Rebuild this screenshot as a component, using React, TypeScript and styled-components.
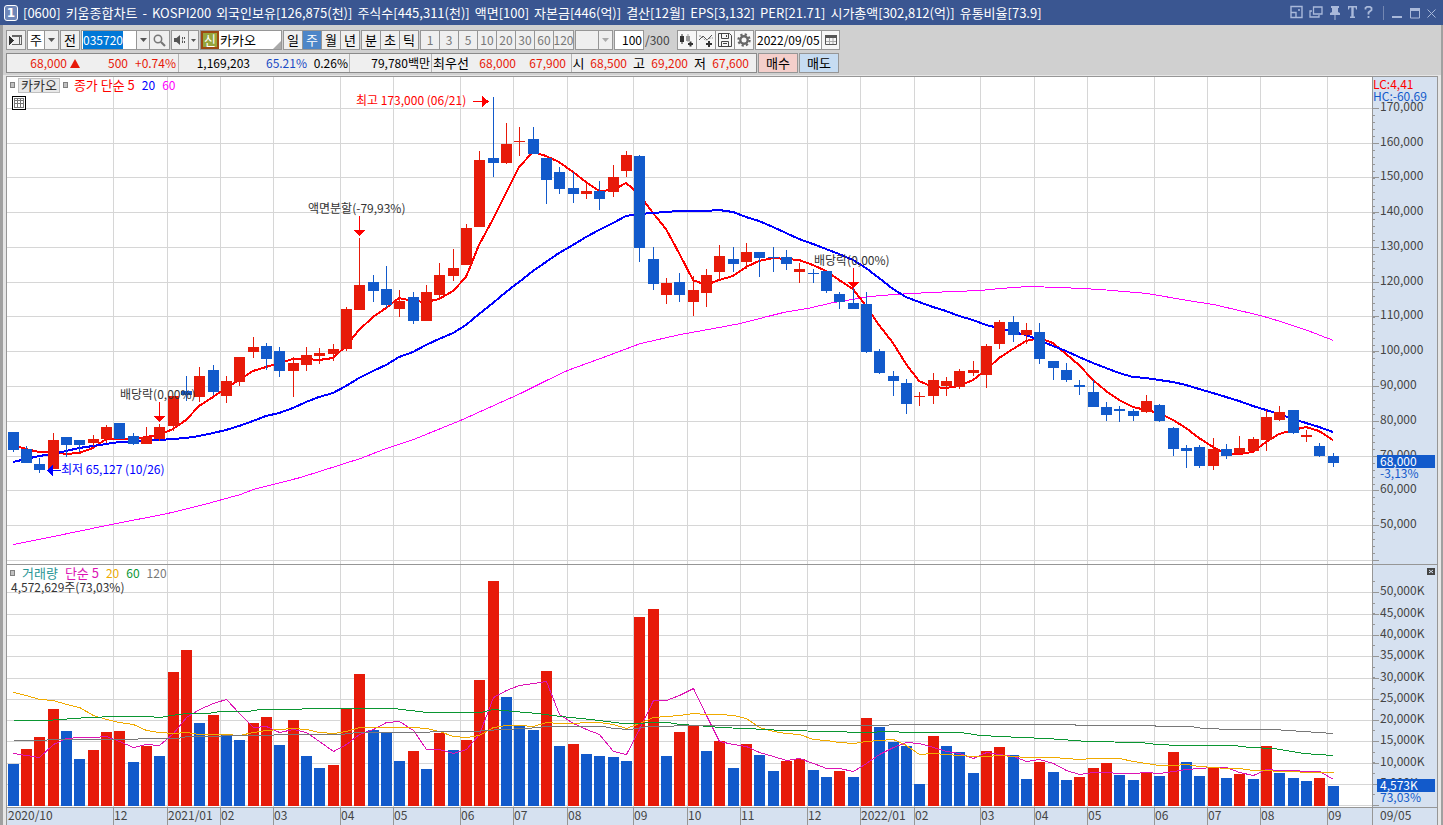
import React, { useEffect, useRef } from "react";
import styled, { createGlobalStyle, css } from "styled-components";

/* ---------- data ---------- */

type Tone = "r" | "b";
/* tone, high, body top, body bottom, low */
type Candle = [Tone, number, number, number, number];

const CANDLES: Candle[] = [
  ["b", 432, 432, 450, 452], ["b", 446, 449, 463, 463], ["b", 458, 464, 470, 473], ["r", 433, 440, 469, 469],
  ["b", 437, 437, 445, 457], ["b", 440, 440, 445, 452], ["r", 435, 439, 443, 446], ["r", 425, 427, 439, 443],
  ["b", 423, 423, 439, 439], ["b", 433, 436, 444, 445], ["r", 427, 437, 444, 444], ["r", 424, 427, 439, 441],
  ["r", 396, 396, 426, 431], ["b", 376, 391, 395, 401], ["r", 367, 376, 397, 402], ["b", 365, 370, 392, 395],
  ["r", 376, 381, 396, 403], ["r", 357, 357, 382, 386], ["r", 337, 347, 352, 358], ["b", 343, 346, 359, 370],
  ["b", 347, 351, 371, 377], ["r", 357, 363, 371, 397], ["r", 347, 355, 365, 371], ["r", 348, 353, 356, 364],
  ["r", 344, 349, 354, 361], ["r", 307, 309, 349, 351], ["r", 238, 285, 310, 310], ["b", 275, 282, 291, 302],
  ["b", 266, 289, 305, 308], ["r", 290, 301, 309, 317], ["b", 292, 297, 321, 324], ["r", 285, 292, 321, 321],
  ["r", 263, 275, 295, 299], ["r", 249, 268, 276, 281], ["r", 224, 228, 265, 265], ["r", 151, 160, 227, 227],
  ["b", 97, 158, 163, 177], ["r", 123, 144, 163, 164], ["r", 127, 141, 142, 156], ["b", 127, 139, 154, 154],
  ["b", 158, 158, 180, 204], ["b", 167, 172, 189, 194], ["b", 172, 188, 194, 203], ["r", 183, 191, 194, 199],
  ["b", 181, 191, 199, 210], ["r", 165, 177, 192, 197], ["r", 151, 155, 171, 177], ["b", 155, 156, 248, 262],
  ["b", 247, 259, 284, 290], ["r", 278, 283, 295, 304], ["b", 273, 282, 295, 302], ["r", 276, 290, 302, 316],
  ["r", 269, 275, 293, 307], ["r", 245, 256, 272, 280], ["b", 247, 259, 264, 272], ["r", 243, 252, 262, 269],
  ["b", 252, 252, 258, 277], ["b", 247, 257, 258, 272], ["b", 250, 257, 264, 270], ["r", 263, 269, 272, 283],
  ["b", 269, 273, 274, 283], ["b", 271, 271, 291, 293], ["b", 292, 294, 302, 309], ["b", 288, 303, 309, 309],
  ["b", 292, 304, 352, 353], ["b", 349, 351, 373, 374], ["b", 371, 376, 381, 396], ["b", 379, 383, 404, 414],
  ["r", 392, 396, 397, 406], ["r", 373, 380, 396, 404], ["r", 377, 381, 386, 396], ["r", 369, 371, 387, 389],
  ["r", 361, 370, 373, 376], ["r", 344, 346, 375, 388], ["r", 320, 322, 344, 349], ["b", 316, 322, 335, 342],
  ["r", 323, 330, 335, 344], ["b", 323, 332, 359, 364], ["b", 361, 361, 368, 380], ["b", 363, 370, 380, 382],
  ["b", 380, 385, 387, 395], ["b", 380, 392, 407, 407], ["b", 402, 407, 415, 421], ["b", 406, 409, 411, 422],
  ["b", 409, 411, 416, 421], ["r", 395, 401, 412, 413], ["b", 404, 405, 421, 422], ["b", 427, 428, 449, 456],
  ["b", 445, 448, 451, 468], ["b", 445, 447, 466, 468], ["r", 438, 449, 466, 470], ["b", 444, 449, 456, 459],
  ["r", 436, 448, 453, 453], ["r", 437, 439, 451, 451], ["r", 410, 417, 440, 451], ["r", 406, 412, 420, 421],
  ["b", 410, 410, 433, 434], ["r", 430, 435, 437, 442], ["b", 443, 446, 456, 457], ["b", 453, 456, 463, 467],
];

const VOLUME_TONES =
  "brrrbbrrrb" + "rbrrbrbbrr" + "brbbrrrbbb" + "rbrbrrrbbb" + "rbrbbbbrrb" + "rrbrbrbbrr" + "bbrbrbbbbr" + "bbbrrbbrbb" + "rrrbbrbrbb" + "rbrbrbbbrb";
const VOLUME_TOPS = [
  764, 749, 737, 709, 731, 759, 750, 732, 731, 762, 746, 756, 672, 650, 723, 715, 735, 740, 723, 717,
  745, 720, 756, 768, 765, 709, 674, 730, 732, 761, 751, 769, 733, 750, 740, 680, 581, 697, 726, 730,
  671, 746, 744, 754, 756, 757, 761, 617, 609, 756, 732, 726, 751, 741, 768, 744, 755, 771, 761, 759,
  770, 777, 771, 777, 718, 727, 742, 746, 784, 736, 746, 752, 773, 751, 747, 755, 779, 762, 772, 780,
  777, 768, 763, 775, 780, 773, 776, 752, 762, 776, 768, 778, 774, 779, 746, 773, 778, 781, 778, 786,
];

const MONTHS: [number, string][] = [
  [113, "12"], [167, "2021/01"], [220, "02"], [273, "03"], [340, "04"], [393, "05"], [460, "06"], [513, "07"],
  [567, "08"], [633, "09"], [687, "10"], [740, "11"], [807, "12"], [860, "2022/01"], [914, "02"], [980, "03"],
  [1034, "04"], [1087, "05"], [1154, "06"], [1207, "07"], [1260, "08"], [1327, "09"],
];

const PRICE_LEVELS: [number, string][] = [
  [108, "170,000"], [143, "160,000"], [177, "150,000"], [212, "140,000"], [247, "130,000"], [282, "120,000"],
  [316, "110,000"], [351, "100,000"], [386, "90,000"], [421, "80,000"], [456, "70,000"], [490, "60,000"],
  [525, "50,000"], [560, ""],
];
const VOLUME_LEVELS: [number, string][] = [
  [592, "50,000K"], [614, "45,000K"], [635, "40,000K"], [656, "35,000K"], [678, "30,000K"], [699, "25,000K"],
  [720, "20,000K"], [741, "15,000K"], [763, "10,000K"], [784, "5,000K"], [805, ""],
];

const MA60_PRICE =
  "13,544 53,536 106,525 167,513 200,505 240,494 253,489 300,477 360,458 383,449 413,439 460,420 480,411 520,393 546,380 567,370 600,358 640,343 680,334 713,328 740,323 763,317 783,312 807,308 833,302 870,296 893,294 930,292 953,291 980,290 1000,288 1027,286 1060,287 1100,289 1147,293 1187,300 1213,304 1260,315 1280,321 1307,330 1333,340";
const MA60_VOLUME =
  "13,720 45,720 60,719 87,717 117,716 147,716 160,717 170,715 187,713 207,713 220,711 247,711 260,709 300,709 303,708 393,708 410,710 427,712 480,712 493,709 513,711 537,713 560,716 590,719 623,723 667,722 680,724 697,725 720,727 767,729 780,730 833,731 860,732 893,731 903,732 960,732 980,735 1020,737 1047,738 1087,741 1140,742 1157,744 1180,745 1233,745 1250,747 1273,748 1303,753 1333,755";
const MA120_VOLUME =
  "13,740 40,740 53,739 133,739 143,738 177,738 187,736 217,736 227,735 270,735 277,734 340,734 357,732 387,732 473,731 500,729 527,728 547,726 603,726 613,728 630,729 647,726 670,726 677,725 887,725 890,724 1073,724 1077,725 1153,725 1157,726 1190,726 1203,728 1233,729 1273,729 1303,731 1333,733";

const centre = (i: number) => Math.floor(13 + (i * 40) / 3);

/* Moving average over the series; the first values come from the history before the first bar. */
function averagePoints(series: number[], span: number, history: number[]) {
  return series
    .map((_, i) => {
      const y =
        i < history.length
          ? history[i]
          : series.slice(i - span + 1, i + 1).reduce((a, b) => a + b, 0) / span;
      return `${centre(i)},${Math.round(y)}`;
    })
    .join(" ");
}

const CLOSES = CANDLES.map(([tone, , top, bottom]) => (tone === "r" ? top : bottom));
const MA5_PRICE = averagePoints(CLOSES, 5, [445, 449, 452, 452]);
const MA20_PRICE = averagePoints(CLOSES, 20, [
  462, 459, 456, 454, 451, 448, 446, 444, 442, 442, 441, 440, 439, 438, 436, 433, 430, 426, 421,
]);
const MA5_VOLUME = averagePoints(VOLUME_TOPS, 5, [753, 755, 757, 744]);
const MA20_VOLUME = averagePoints(VOLUME_TOPS, 20, [
  692, 695, 699, 700, 704, 707, 715, 719, 722, 724, 730, 732, 733, 732, 734, 734, 734, 735, 732,
]);

/* ---------- styles ---------- */

const C = {
  red: "#e71a09",
  blue: "#125acb",
  grid: "#d6d6d6",
  line: "#969696",
  axis: "#d6e1f0",
  text: "#444444",
};
const tones = { r: C.red, b: C.blue };

const GlobalStyle = createGlobalStyle`
  * { box-sizing: border-box; }
  body { margin: 0; background: #d0d0d0; }
  body, button, input, select {
    font-family: "Noto Sans CJK KR", "Liberation Sans", sans-serif;
    font-size: 12px;
    line-height: 18px;
    color: #000;
  }
  button, input, select { margin: 0; border: 0; padding: 0; border-radius: 0; outline: none; }
  svg { display: block; }
  svg text { font-size: 12px; }
`;

const Window = styled.div`
  min-height: 100vh;
  display: flex;
  flex-direction: column;
  overflow: hidden;
`;

const TitleBar = styled.header`
  height: 25px;
  flex: none;
  display: flex;
  align-items: center;
  justify-content: space-between;
  padding: 0 7px 0 4px;
  background: #3a5691;
  color: #fff;
`;
const TitleText = styled.h1`
  margin: 0;
  display: flex;
  align-items: center;
  gap: 5px;
  font-size: 13px;
  font-weight: 400;
  line-height: 20px;
  white-space: nowrap;
`;
const WindowNumber = styled.span`
  width: 14px;
  height: 16px;
  border: 1px solid #fff;
  border-radius: 3px;
  background: #6f87b8;
  font: bold 12px/14px "DejaVu Sans", sans-serif;
  text-align: center;
`;
const WindowTools = styled.div`
  display: flex;
  align-items: center;
  gap: 6px;
`;
const ToolButton = styled.button`
  height: 16px;
  background: none;
  color: #a9b9da;
`;
const ToolDivider = styled.span`
  width: 1px;
  height: 14px;
  margin: 0 1px 0 4px;
  background: #7387b2;
`;

const Body = styled.main`
  flex: 1;
  display: flex;
  flex-direction: column;
  border: solid #a0a0a0;
  border-width: 0 2px 0 3px;
`;
const Controls = styled.div`
  flex: none;
  height: 50px;
  padding: 5px 3px 0;
  display: flex;
  flex-direction: column;
  gap: 3px;
  white-space: nowrap;
`;
const Row = styled.div<{ $gap: number }>`
  display: flex;
  gap: ${(p) => p.$gap}px;
  height: 20px;
`;
const Group = styled.div<{ $white?: boolean }>`
  display: flex;
  height: 20px;
  flex: none;
  border: 1px solid #969696;
  background: ${(p) => (p.$white ? "#fff" : "#efefef")};
  & > * + * { border-left: 1px solid #969696; }
`;
const Key = styled.button<{ $w: number; $state?: "on" | "off"; $plain?: boolean }>`
  width: ${(p) => p.$w}px;
  flex: none;
  height: 18px;
  display: flex;
  align-items: center;
  justify-content: center;
  font-size: 13px;
  background: ${(p) => (p.$plain ? "#f6f6f6" : "#efefef")};
  ${(p) => p.$state === "on" && css`background: #4d86c8; color: #fff;`}
  ${(p) => p.$state === "off" && css`color: #777; font-size: 12px;`}
`;
const Pick = styled.select<{ $w: number }>`
  appearance: none;
  width: ${(p) => p.$w}px;
  height: 18px;
  padding-left: 2px;
  background: #fff;
  font-size: 13px;
  &:disabled { background: #efefef; opacity: 1; }
`;
const Field = styled.input<{ $w: number; $right?: boolean }>`
  width: ${(p) => p.$w}px;
  height: 18px;
  padding: 0 1px;
  background: #fff;
  text-align: ${(p) => (p.$right ? "right" : "left")};
  caret-color: #f08030;
  &::selection { background: #0078d7; color: #fff; }
`;
const StockName = styled.div`
  flex: none;
  width: 82px;
  height: 20px;
  display: flex;
  justify-content: space-between;
  border: 1px solid #969696;
  background: #fff;
  font-size: 13px;
`;
const CreditMark = styled.span`
  width: 18px;
  height: 18px;
  border: 2px solid #9c4a12;
  background: #96a53c;
  color: #fff;
  line-height: 14px;
  text-align: center;
`;
const NameText = styled.span`
  flex: 1;
  padding-left: 1px;
`;
const Corner = styled.svg`
  align-self: flex-end;
`;
const Total = styled.span`
  width: 31px;
  line-height: 20px;
  color: #444;
`;

const Quote = styled.div`
  display: flex;
  height: 20px;
  flex: none;
  border: 1px solid #8a8a8a;
  background: #efefef;
`;
const QuoteCell = styled.div<{ $end: number; $last?: boolean }>`
  display: flex;
  padding-right: ${(p) => p.$end}px;
  border-right: ${(p) => (p.$last ? 0 : 1)}px solid #b4b4b4;
`;
const Value = styled.span<{ $w: number; $color?: string }>`
  width: ${(p) => p.$w}px;
  text-align: right;
  color: ${(p) => p.$color ?? "#000"};
`;
const Caption = styled.span<{ $w: number }>`
  width: ${(p) => p.$w}px;
  font-size: 13px;
  text-align: center;
`;
const Rise = styled.svg`
  margin: 5px 2px 0 3px;
`;
const Order = styled.button<{ $fill: string }>`
  width: 40px;
  height: 20px;
  border: 1px solid #969696;
  background: ${(p) => p.$fill};
  font-size: 13px;
`;

const Sheet = styled.section`
  flex: 1;
  display: flex;
  padding: 1px 3px 0;
  background: #e6e6e6;
`;
const Frame = styled.div`
  flex: 1;
  min-width: 0;
  display: flex;
  flex-direction: column;
  border: solid ${C.line};
  border-width: 1px 1px 0;
`;
const Panel = styled.div<{ $h: number; $last?: boolean }>`
  position: relative;
  display: flex;
  flex: none;
  height: ${(p) => p.$h}px;
  border-bottom: ${(p) => (p.$last ? 0 : 1)}px solid ${C.line};
`;
const Plot = styled.svg<{ $axis?: boolean }>`
  flex: 1;
  min-width: 0;
  height: 100%;
  overflow: ${(p) => (p.$axis ? "visible" : "hidden")};
  background: ${(p) => (p.$axis ? C.axis : "#fff")};
`;
const Scale = styled.svg`
  flex: none;
  width: 65px;
  height: 100%;
  overflow: visible;
  border-left: 1px solid ${C.line};
  background: ${C.axis};
`;
const Legend = styled.div`
  position: absolute;
  top: 0;
  left: 3px;
  display: flex;
  flex-direction: column;
  color: #333;
`;
const LegendRow = styled.div<{ $gap: number }>`
  display: flex;
  align-items: center;
  gap: ${(p) => p.$gap}px;
  height: 16px;
  line-height: 16px;
`;
const Dot = styled.span`
  width: 5px;
  height: 6px;
  border: 1px solid #808080;
  background: #c0c0c0;
`;
const NameTag = styled.button`
  width: 42px;
  height: 15px;
  border: 1px solid #c0c0c0;
  background: #e8e8e8;
  font-size: 13px;
  line-height: 12px;
  color: #333;
`;
const Ink = styled.span<{ $color: string; $name?: boolean }>`
  color: ${(p) => p.$color};
  font-size: ${(p) => (p.$name ? 13 : 12)}px;
`;
const GridButton = styled.button`
  width: 14px;
  height: 14px;
  margin: 3px 0 0 2px;
  border: 1px solid #000;
  background: #fff;
`;
const LegendNote = styled.div`
  padding-left: 1px;
  line-height: 12px;
`;
const ClosePanel = styled.button`
  position: absolute;
  top: 3px;
  right: 2px;
  width: 8px;
  height: 7px;
  background: #444;
`;

/* ---------- small drawings ---------- */

const Down = ({ small, faint }: { small?: boolean; faint?: boolean }) => (
  <svg width={small ? 5 : 7} height={small ? 3 : 4} viewBox="0 0 7 4" fill={faint ? "#aaa" : "#555"} aria-hidden="true">
    <path d="M0 0h7L3.500 4z" />
  </svg>
);
const PanelIcon = () => (
  <svg width="14" height="14" viewBox="0 0 14 14" fill="none" stroke="#666" shapeRendering="crispEdges" aria-hidden="true">
    <path d="M3.500 3V2.500h9v9h-9V11M10.500 3v9M3 3.500h10" />
    <path d="M0 3v9l5-4.500z" fill="#333" stroke="none" />
  </svg>
);
const SearchIcon = () => (
  <svg width="13" height="13" viewBox="0 0 13 13" fill="none" stroke="#777" aria-hidden="true">
    <circle cx="5" cy="5" r="3.700" strokeWidth="1.500" />
    <path d="M8 8l4 4" strokeWidth="2.200" />
  </svg>
);
const SpeakerIcon = () => (
  <svg width="13" height="12" viewBox="0 0 13 12" fill="#555" aria-hidden="true">
    <path d="M0 4h2.500L6 1v10L2.500 8H0zM8 3h1v2H8zM8 7h1v2H8zM10 3h1v2h-1zM10 7h1v2h-1zM8 5.500h1v1H8z" />
  </svg>
);
const CandleIcon = () => (
  <svg width="16" height="15" viewBox="0 0 16 15" aria-hidden="true">
    <path d="M1 3h4v6H1zM2.500 1h1v10h-1z" fill="#333" />
    <path d="M7 3h4v5H7zM8.500 1h1v8h-1z" fill="#999" />
    <path d="M9 11h5M11.500 8.500v5" stroke="#333" strokeWidth="2" />
  </svg>
);
const CurveIcon = () => (
  <svg width="16" height="15" viewBox="0 0 16 15" fill="none" aria-hidden="true">
    <path d="M1 7l4-4 4 4 5-5" stroke="#555" />
    <path d="M1 3h2l4 4h2l3-2h3" stroke="#999" strokeDasharray="2 1" />
    <path d="M8 11h6M11 8v6" stroke="#333" strokeWidth="2" />
  </svg>
);
const SaveIcon = () => (
  <svg width="14" height="14" viewBox="0 0 14 14" fill="none" stroke="#444" aria-hidden="true">
    <path d="M.500 .500h11l2 2v11H.500zM3.500 .500v5h7v-5M3.500 13.500v-5h7v5M5 10.500h4M8.500 2v2" />
  </svg>
);
const GearIcon = () => (
  <svg width="14" height="14" viewBox="0 0 14 14" fill="none" stroke="#666" aria-hidden="true">
    <circle cx="7" cy="7" r="3.700" strokeWidth="2.400" />
    <circle cx="7" cy="7" r="5.600" strokeWidth="2.200" strokeDasharray="2.200 2.200" />
  </svg>
);
const CalendarIcon = () => (
  <svg width="12" height="12" viewBox="0 0 12 12" fill="none" stroke="#555" aria-hidden="true">
    <path d="M.500 1.500h11v9H.500z" />
    <path d="M0 2.500h12" strokeWidth="3" />
    <path d="M1 7.500h10M4.500 4v6M8 4v6" stroke="#aaa" />
  </svg>
);
const TableIcon = () => (
  <svg width="12" height="12" viewBox="0 0 12 12" fill="none" stroke="#777" shapeRendering="crispEdges" aria-hidden="true">
    <path d="M1.500 1.500h9v9h-9zM1.500 3.500h9M1.500 6.500h9M4.500 1.500v9M7.500 1.500v9" />
  </svg>
);

const WINDOW_ICONS: [string, number, React.ReactNode][] = [
  ["창 축소", 13, <path key="a" d="M1 1.500h11v11H1zM1 7.500h5v5M8 5h2" stroke="currentColor" strokeWidth="1.400" fill="none" />],
  ["창 복사", 14, <path key="b" d="M4.500 2h8.500v7H4.500zM3 6H1v6h9v-2" stroke="currentColor" strokeWidth="1.300" fill="none" />],
  ["고정", 12, <path key="c" d="M2 1h8v2H9v4l2 1v2H6.500v5h-1v-5H1V8l2-1V3H2z" fill="currentColor" />],
  ["글꼴", 11, <path key="d" d="M1 1h9v3.500H9L8.500 2.500H6.700v9H8V13H3v-1.500h1.300v-9H2.500L2 4.500H1z" fill="currentColor" />],
  ["도움말", 9, <path key="e" d="M1.500 4.500V3L3 1.800h3L7.500 3v2L4.500 7.500v2M4.500 11v2" stroke="currentColor" strokeWidth="1.800" fill="none" />],
];

/* ---------- chart pieces ---------- */

const GridLines = ({ levels }: { levels: [number, string][] }) => (
  <g fill={C.grid} shapeRendering="crispEdges">
    {MONTHS.map(([x]) => (
      <rect key={x} x={x} y="77" width="1" height="730" />
    ))}
    {levels.map(([y]) => (
      <rect key={y} x="7" y={y} width="100%" height="1" />
    ))}
  </g>
);

const Average = ({ points, color, bold }: { points: string; color: string; bold?: boolean }) => (
  <polyline
    points={points}
    fill="none"
    stroke={color}
    strokeWidth={bold ? 2 : 1}
    transform={bold ? undefined : "translate(.5 .5)"}
    shapeRendering="crispEdges"
  />
);

const EventMark = ({ x, y, textX, label }: { x: number; y: number; textX: number; label: string }) => (
  <g>
    <path d={`M${x} ${y - 20}h1v14h-1zM${x - 5} ${y - 6}h11l-5.500 6z`} fill="#f00" shapeRendering="crispEdges" />
    <text x={textX} y={y - 23} fill="#333">{label}</text>
  </g>
);

const ScaleMarks = ({ levels, step, from, to }: { levels: [number, string][]; step: number; from: number; to: number }) => {
  const minor: number[] = [];
  for (let y = levels[levels.length - 1][0]; y > from; y -= step) if (y < to) minor.push(Math.round(y));
  return (
    <g>
      <g fill={C.line} shapeRendering="crispEdges">
        {minor.map((y) => <rect key={y} x="0" y={y} width="2" height="1" />)}
        {levels.map(([y]) => <rect key={y} x="0" y={y} width="6" height="1" />)}
      </g>
      {levels.map(([y, label]) => (
        <text key={y} x="7" y={y + 3} fill={C.text}>{label}</text>
      ))}
    </g>
  );
};

/* ---------- page ---------- */

const TITLE = [
  "[0600]", "키움종합차트", "-", "KOSPI200", "외국인보유[126,875(천)]", "주식수[445,311(천)]", "액면[100]",
  "자본금[446(억)]", "결산[12월]", "EPS[3,132]", "PER[21.71]", "시가총액[302,812(억)]", "유통비율[73.9]",
];

function Title() {
  return (
    <TitleBar>
      <TitleText>
        <WindowNumber>1</WindowNumber>
        {TITLE.map((t) => <span key={t}>{t}</span>)}
      </TitleText>
      <WindowTools>
        {WINDOW_ICONS.map(([label, w, art]) => (
          <ToolButton key={label} aria-label={label}>
            <svg width={w} height="15" viewBox={`0 0 ${w} 15`}>{art}</svg>
          </ToolButton>
        ))}
        <ToolDivider />
        <ToolButton aria-label="최소화">
          <svg width="12" height="15"><path d="M1 11h10v2H1z" fill="currentColor" /></svg>
        </ToolButton>
        <ToolButton aria-label="최대화">
          <svg width="12" height="15" fill="none" stroke="currentColor"><path d="M1.500 4v9h9V4" /><path d="M1 4.500h10" strokeWidth="3" /></svg>
        </ToolButton>
        <ToolButton aria-label="닫기">
          <svg width="9" height="15" fill="none" stroke="currentColor"><path d="M.500 4.500l8 8M8.500 4.500l-8 8" /></svg>
        </ToolButton>
      </WindowTools>
    </TitleBar>
  );
}

function Toolbar() {
  const code = useRef<HTMLInputElement>(null);
  useEffect(() => {
    code.current?.focus();
    code.current?.select();
  }, []);
  return (
    <Row $gap={1}>
      <Group><Key $w={18} aria-label="패널"><PanelIcon /></Key></Group>
      <Group>
        <Pick $w={16} aria-label="종목 구분" defaultValue="주"><option>주</option></Pick>
        <Key $w={14} aria-label="구분 펼치기"><Down /></Key>
      </Group>
      <Group><Key $w={18}>전</Key></Group>
      <Group $white>
        <Field $w={54} ref={code} aria-label="종목 코드" defaultValue="035720" />
        <Key $w={13} aria-label="종목 목록"><Down /></Key>
        <Key $w={20} aria-label="종목 검색"><SearchIcon /></Key>
      </Group>
      <Group>
        <Key $w={16} aria-label="소리"><SpeakerIcon /></Key>
        <Key $w={10} aria-label="소리 설정"><Down small /></Key>
      </Group>
      <StockName>
        <CreditMark>신</CreditMark>
        <NameText>카카오</NameText>
        <Corner width="8" height="8" fill="#aaa" aria-hidden="true"><path d="M8 0v8H0z" /></Corner>
      </StockName>
      <Group>
        {["일", "주", "월", "년"].map((t) => (
          <Key key={t} $w={t === "일" ? 18 : 19} $state={t === "주" ? "on" : undefined} aria-pressed={t === "주"}>{t}</Key>
        ))}
      </Group>
      <Group>
        {["분", "초", "틱"].map((t) => <Key key={t} $w={t === "분" ? 18 : 19}>{t}</Key>)}
      </Group>
      <Group>
        {["1", "3", "5", "10", "20", "30", "60", "120"].map((t) => (
          <Key key={t} $w={t === "1" ? 18 : t === "120" ? 20 : 19} $state="off" disabled>{t}</Key>
        ))}
      </Group>
      <Group>
        <Pick $w={22} aria-label="주기 선택" disabled><option></option></Pick>
        <Key $w={14} aria-label="주기 펼치기" disabled><Down faint /></Key>
      </Group>
      <Group $white><Field $w={28} $right aria-label="조회 건수" defaultValue="100" /></Group>
      <Total>/300</Total>
      <Group>
        <Key $w={18} $plain aria-label="봉 추가"><CandleIcon /></Key>
        <Key $w={19} $plain aria-label="지표 추가"><CurveIcon /></Key>
        <Key $w={19} $plain aria-label="저장"><SaveIcon /></Key>
        <Key $w={19} $plain aria-label="설정"><GearIcon /></Key>
      </Group>
      <Group $white>
        <Field $w={65} aria-label="조회 일자" defaultValue="2022/09/05" />
        <Key $w={18} $plain aria-label="달력"><CalendarIcon /></Key>
      </Group>
    </Row>
  );
}

function QuoteRow() {
  return (
    <Row $gap={1}>
      <Quote>
        <QuoteCell $end={2}>
          <Value $w={60} $color={C.red}>68,000</Value>
          <Rise width="10" height="9" fill={C.red} aria-label="상승"><path d="M5 0l5 9H0z" /></Rise>
          <Value $w={46} $color={C.red}>500</Value>
          <Value $w={48} $color={C.red}>+0.74%</Value>
        </QuoteCell>
        <QuoteCell $end={1}>
          <Value $w={71}>1,169,203</Value>
          <Value $w={57} $color="#1a4bc4">65.21%</Value>
          <Value $w={41}>0.26%</Value>
        </QuoteCell>
        <QuoteCell $end={1}><Value $w={80}>79,780백만</Value></QuoteCell>
        <QuoteCell $end={5}>
          <Caption $w={38}>최우선</Caption>
          <Value $w={46} $color={C.red}>68,000</Value>
          <Value $w={50} $color={C.red}>67,900</Value>
        </QuoteCell>
        <QuoteCell $end={7} $last>
          <Caption $w={13}>시</Caption>
          <Value $w={42} $color={C.red}>68,500</Value>
          <Caption $w={24}>고</Caption>
          <Value $w={37} $color={C.red}>69,200</Value>
          <Caption $w={24}>저</Caption>
          <Value $w={37} $color={C.red}>67,600</Value>
        </QuoteCell>
      </Quote>
      <Order $fill="#f4cfcb">매수</Order>
      <Order $fill="#c6dcf2">매도</Order>
    </Row>
  );
}

function PricePanel() {
  return (
    <Panel $h={488}>
      <Plot role="img" aria-label="카카오 주봉 차트">
        <g transform="translate(-7 -77)">
          <GridLines levels={PRICE_LEVELS} />
          <Average points={MA60_PRICE} color="#f0f" />
          <Average points={MA5_PRICE} color="#f00" bold />
          <Average points={MA20_PRICE} color="#00f" bold />
          <g shapeRendering="crispEdges">
            {CANDLES.map(([tone, high, top, bottom, low], i) => (
              <g key={i} fill={tones[tone]}>
                <rect x={centre(i)} y={high} width="1" height={low - high} />
                <rect x={centre(i) - 5} y={top} width="11" height={bottom - top} />
              </g>
            ))}
          </g>
          <EventMark x={159} y={422} textX={120} label="배당락(0,00%)" />
          <EventMark x={359} y={236} textX={308} label="액면분할(-79,93%)" />
          <EventMark x={853} y={288} textX={814} label="배당락(0,00%)" />
          <text x="356" y="105" fill="#f00">최고 173,000 (06/21)</text>
          <path d="M473 101h9v-5l7 5.500-7 5.500v-5h-9z" fill="#f00" shapeRendering="crispEdges" />
          <text x="61" y="474" fill="#00f">최저 65,127 (10/26)</text>
          <path d="M61 470h-8v-5l-6 5.500 6 5.500v-5h8z" fill="#00f" shapeRendering="crispEdges" />
        </g>
      </Plot>
      <Scale>
        <g transform="translate(0 -77)">
          <ScaleMarks levels={PRICE_LEVELS} step={6.95} from={108} to={560} />
          <rect x="0" y="77" width="64" height="25" fill={C.axis} />
          <text x="0" y="89" fill="#f00">LC:4,41</text>
          <text x="0" y="101" fill={C.blue}>HC:-60,69</text>
          <rect x="4" y="455" width="58" height="13" fill={C.blue} />
          <text x="7" y="466" fill="#fff">68,000</text>
          <text x="7" y="478" fill={C.blue}>-3,13%</text>
        </g>
      </Scale>
      <Legend>
        <LegendRow $gap={3}>
          <Dot />
          <NameTag>카카오</NameTag>
          <Dot />
          <LegendRow $gap={7}>
            <Ink $color="#f00" $name>&nbsp;종가 단순 5</Ink>
            <Ink $color="#00f">20</Ink>
            <Ink $color="#f0f">60</Ink>
          </LegendRow>
        </LegendRow>
        <GridButton aria-label="데이터 표"><TableIcon /></GridButton>
      </Legend>
    </Panel>
  );
}

function VolumePanel() {
  return (
    <Panel $h={243}>
      <Plot role="img" aria-label="거래량 차트">
        <g transform="translate(-7 -565)">
          <GridLines levels={VOLUME_LEVELS} />
          <g shapeRendering="crispEdges">
            {VOLUME_TOPS.map((top, i) => (
              <rect key={i} x={centre(i) - 5} y={top} width="11" height={806 - top} fill={tones[VOLUME_TONES[i] as Tone]} />
            ))}
          </g>
          <Average points={MA5_VOLUME} color="#dc14b4" />
          <Average points={MA20_VOLUME} color="#f0aa00" />
          <Average points={MA60_VOLUME} color="#0a9632" />
          <Average points={MA120_VOLUME} color="#787878" />
        </g>
      </Plot>
      <Scale>
        <g transform="translate(0 -565)">
          <ScaleMarks levels={VOLUME_LEVELS} step={10.65} from={575} to={805} />
          <rect x="4" y="779" width="58" height="13" fill={C.blue} />
          <text x="7" y="790" fill="#fff">4,573K</text>
          <text x="7" y="802" fill={C.blue}>73,03%</text>
        </g>
      </Scale>
      <Legend>
        <LegendRow $gap={7}>
          <Dot />
          <Ink $color="#289696" $name>거래량</Ink>
          <Ink $color="#dc14b4" $name>단순 5</Ink>
          <Ink $color="#f0aa00">20</Ink>
          <Ink $color="#0a9632">60</Ink>
          <Ink $color="#787878">120</Ink>
        </LegendRow>
        <LegendNote>4,572,629주(73,03%)</LegendNote>
      </Legend>
      <ClosePanel aria-label="거래량 닫기">
        <svg width="8" height="7" stroke="#d6e1f0" aria-hidden="true"><path d="M2 2l4 3M6 2L2 5" /></svg>
      </ClosePanel>
    </Panel>
  );
}

function DateAxis() {
  return (
    <Panel $h={17} $last>
      <Plot $axis role="img" aria-label="날짜 축">
        <text x="1" y="12" fill={C.text}>2020/10</text>
        {MONTHS.map(([x, label]) => (
          <g key={x}>
            <rect x={x - 7} y="0" width="1" height="17" fill={C.line} />
            <text x={x - 6} y="12" fill={C.text}>{label}</text>
          </g>
        ))}
      </Plot>
      <Scale><text x="7" y="12" fill={C.text}>09/05</text></Scale>
    </Panel>
  );
}

export default function App() {
  return (
    <Window>
      <GlobalStyle />
      <Title />
      <Body>
        <Controls>
          <Toolbar />
          <QuoteRow />
        </Controls>
        <Sheet>
          <Frame>
            <PricePanel />
            <VolumePanel />
            <DateAxis />
          </Frame>
        </Sheet>
      </Body>
    </Window>
  );
}
